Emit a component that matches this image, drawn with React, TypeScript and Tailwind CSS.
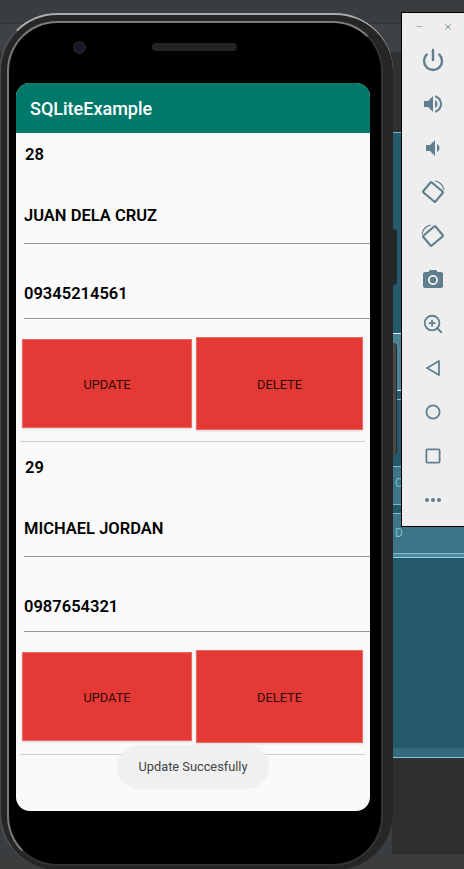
import { Power, ZoomIn, Minus, X } from "lucide-react";

const font = { fontFamily: "Roboto, sans-serif" };

function Record({ id, name, phone }: { id: string; name: string; phone: string }) {
    return (
        <div className="h-[313px] text-black">
            <div className="h-[42px] pl-[9px] pt-[2px] flex items-center text-[16.5px] font-semibold leading-none">{id}</div>
            <div className="ml-2 h-[69px] pt-[14px] flex items-center border-b border-[#9a9a9a] text-[16.5px] font-semibold">{name}</div>
            <div className="ml-2 h-[75px] pt-[27px] flex items-center border-b border-[#9a9a9a] text-[16.5px] font-semibold">{phone}</div>
            <div className="flex items-center h-[122px] pl-[6px] pt-[7px]">
                <button className="w-[170px] h-[89px] pt-[2px] bg-[#e53935] border border-[#ec6a66] shadow-[0_1px_2px_rgba(0,0,0,0.15)] text-[12.8px] text-[#2e0a09]">UPDATE</button>
                <button className="ml-1 w-[167px] h-[93px] pt-[2px] bg-[#e53935] border border-[#ec6a66] shadow-[0_1px_2px_rgba(0,0,0,0.15)] text-[12.8px] text-[#2e0a09]">DELETE</button>
            </div>
            <div className="ml-1 w-[345px] h-[1px] bg-[#cfcfcf]"></div>
        </div>
    );
}

function Backdrop() {
    return (
        <div className="absolute inset-0 bg-[#3a3d3f]">
            <div className="absolute left-0 right-0 top-[23px] h-[29px] bg-[#3f4244] border-t border-[#303234]"></div>
            <div className="absolute left-0 right-0 top-[52px] h-[80px] bg-[#2f3133]"></div>
            <div className="absolute left-[392px] right-0 top-[132px] h-[626px] bg-[#245a6b] border-t border-[#6fb4c6]">
                <div className="h-[200px]"></div>
                <div className="h-[57px] bg-[#4b8296] border-t border-[#e6f4f8]"></div>
                <div className="h-[9px] border-t border-[#e6f4f8]"></div>
                <div className="h-[67px] border-t border-[#7fbccd]"></div>
                <div className="h-[39px] bg-[#3d7488] border-y border-[#7fbccd] pl-[3px] pt-[10px] text-[12px] leading-none text-[#7fbccd]">O</div>
                <div className="h-[8px]"></div>
                <div className="h-[41px] bg-[#3d7488] border-y border-[#7fbccd] pl-[3px] pt-[13px] text-[12px] leading-none text-[#7fbccd]">D</div>
                <div className="h-[3px] bg-[#4f8a9d]"></div>
                <div className="h-[1px] bg-[#8fd0e0]"></div>
                <div className="h-[190px]"></div>
                <div className="h-[9px] bg-[#336a7c]"></div>
            </div>
            <div className="absolute left-[392px] right-0 top-[757px] h-[1px] bg-[#7fc4d6]"></div>
            <div className="absolute left-[392px] right-0 top-[758px] bottom-0 bg-[#2f2f2f]"></div>
            <div className="absolute left-0 right-0 top-[854px] bottom-0 bg-[#3a3c3e]"></div>
        </div>
    );
}

function Slot({ children }: { children: React.ReactNode }) {
    return <div className="h-[44px] w-full shrink-0 flex items-center justify-center">{children}</div>;
}

function SidePanel() {
    const c = "#5f7f8e";
    return (
        <div className="absolute left-[401px] top-[12px] w-[70px] h-[515px] bg-[#eeeeee] border border-black flex flex-col pr-[6px]">
            <div className="h-[25px] shrink-0 flex justify-between items-start pt-[9px] pl-[13px] pr-[11px]">
                <Minus size={9} className="text-[#8d9aa1]" />
                <X size={10} className="text-[#5f7f8e]" />
            </div>
            <Slot>
                <Power size={24} strokeWidth={2.4} color={c} />
            </Slot>
            <Slot>
                <svg width="24" height="24" viewBox="0 0 24 24" fill={c}>
                    <path d="M3 9v6h4l5 5V4L7 9H3zm13.5 3c0-1.77-1.02-3.29-2.5-4.03v8.05c1.48-.73 2.5-2.25 2.5-4.02zM14 3.23v2.06c2.89.86 5 3.54 5 6.71s-2.11 5.85-5 6.71v2.06c4.01-.91 7-4.49 7-8.77s-2.99-7.86-7-8.77z" />
                </svg>
            </Slot>
            <Slot>
                <svg width="24" height="24" viewBox="0 0 24 24" fill={c}>
                    <path d="M18.5 12c0-1.77-1.02-3.29-2.5-4.03v8.05c1.48-.73 2.5-2.25 2.5-4.02zM5 9v6h4l5 5V4L9 9H5z" />
                </svg>
            </Slot>
            <Slot>
                <svg width="26" height="26" viewBox="0 0 26 26" fill="none" stroke={c} strokeWidth="2.2">
                    <rect x="5" y="6.5" width="16" height="13" rx="1" transform="rotate(40 13 13)" />
                    <path d="M15 2a10.5 10.5 0 0 1 9 9" strokeWidth="1.2" />
                </svg>
            </Slot>
            <Slot>
                <svg width="26" height="26" viewBox="0 0 26 26" fill="none" stroke={c} strokeWidth="2.2">
                    <rect x="5" y="6.5" width="16" height="13" rx="1" transform="rotate(-40 13 13)" />
                    <path d="M11 2a10.5 10.5 0 0 0-9 9" strokeWidth="1.2" />
                </svg>
            </Slot>
            <Slot>
                <svg width="24" height="24" viewBox="0 0 24 24" fill={c}>
                    <circle cx="12" cy="12" r="3.2" />
                    <path d="M9 2L7.17 4H4c-1.1 0-2 .9-2 2v12c0 1.1.9 2 2 2h16c1.1 0 2-.9 2-2V6c0-1.1-.9-2-2-2h-3.17L15 2H9zm3 15c-2.76 0-5-2.24-5-5s2.24-5 5-5 5 2.24 5 5-2.24 5-5 5z" />
                </svg>
            </Slot>
            <Slot>
                <ZoomIn size={22} strokeWidth={2} color={c} />
            </Slot>
            <Slot>
                <svg width="18" height="18" viewBox="0 0 18 18" fill="none" stroke={c} strokeWidth="1.8" strokeLinejoin="round">
                    <path d="M15 2v14L3 9z" />
                </svg>
            </Slot>
            <Slot>
                <svg width="18" height="18" viewBox="0 0 18 18" fill="none" stroke={c} strokeWidth="1.8">
                    <circle cx="9" cy="9" r="6.6" />
                </svg>
            </Slot>
            <Slot>
                <svg width="18" height="18" viewBox="0 0 18 18" fill="none" stroke={c} strokeWidth="1.8">
                    <rect x="2.4" y="2.4" width="13.2" height="13.2" rx="1" />
                </svg>
            </Slot>
            <Slot>
                <div className="flex gap-[2px]">
                    <div className="w-[4px] h-[4px] rounded-full bg-[#5f7f8e]"></div>
                    <div className="w-[4px] h-[4px] rounded-full bg-[#5f7f8e]"></div>
                    <div className="w-[4px] h-[4px] rounded-full bg-[#5f7f8e]"></div>
                </div>
            </Slot>
        </div>
    );
}

function Phone() {
    return (
        <div className="absolute left-[-1px] top-[13px] w-[394px] h-[857px] rounded-[58px] bg-[#262626] border-t-2 border-t-[#a9abad] border-l-2 border-l-[#4a4d4f] pt-[6px] pl-[6px] pr-[10px] pb-[4px]">
            <div className="relative w-full h-full rounded-[50px] bg-black border-2 border-t-[#7a7c7e] border-l-[#77797b] border-r-[#333333] border-b-[#333333]">
                <div className="absolute left-[64px] top-[18px] w-[13px] h-[13px] rounded-full bg-[#15182b] border-2 border-[#222222]"></div>
                <div className="absolute left-[143px] top-[20px] w-[85px] h-[8px] rounded-full bg-[#232323]"></div>
                <div className="absolute left-[7px] top-[60px] w-[354px] h-[728px] rounded-[14px] bg-[#fafafa] overflow-hidden">
                    <div className="h-[50px] bg-[#00796b] flex items-center pl-[14px] text-white text-[18px] font-medium">SQLiteExample</div>
                    <Record id="28" name="JUAN DELA CRUZ" phone="09345214561" />
                    <Record id="29" name="MICHAEL JORDAN" phone="0987654321" />
                </div>
                <div className="absolute left-[108px] top-[722px] w-[152px] h-[44px] rounded-[22px] bg-[#f0f0f0] flex items-center justify-center text-[12.8px] text-[#444444]">Update Succesfully</div>
            </div>
        </div>
    );
}

export default function App() {
    return (
        <div className="relative w-[464px] h-[869px] overflow-hidden" style={font}>
            <Backdrop />
            <div className="absolute left-[393px] top-[229px] w-[4px] h-[56px] rounded-r-sm bg-[#23282b]"></div>
            <div className="absolute left-[393px] top-[343px] w-[4px] h-[112px] rounded-r-sm bg-[#4a4a4a] border-r border-[#2a2a2a]"></div>
            <Phone />
            <SidePanel />
        </div>
    );
}
